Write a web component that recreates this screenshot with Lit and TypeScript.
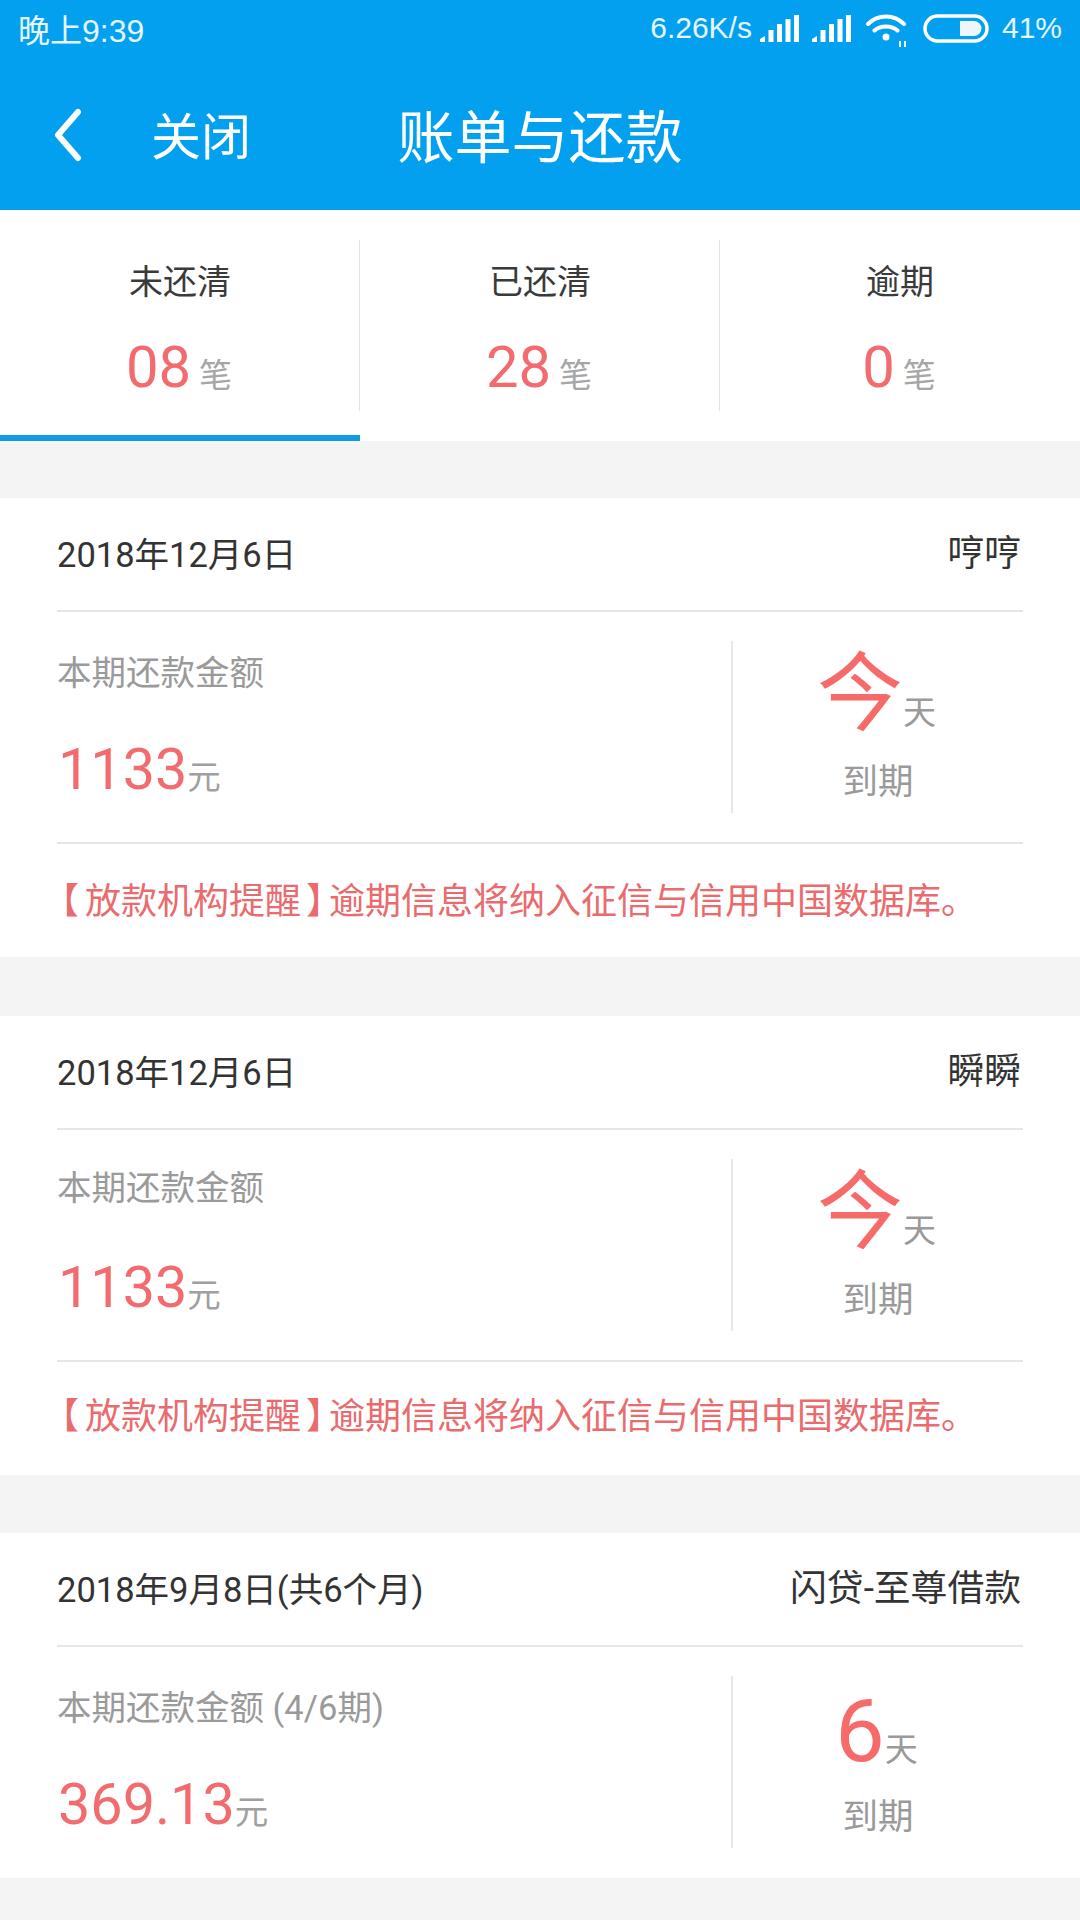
import { LitElement, html, css } from "lit";
import { customElement } from "lit/decorators.js";

interface Bill {
  date: string;
  name: string;
  label: string;
  amount: string;
  big: string;
  isToday: boolean;
  notice: boolean;
}

const bills: Bill[] = [
  { date: "2018年12月6日", name: "哼哼", label: "本期还款金额", amount: "1133", big: "今", isToday: true, notice: true },
  { date: "2018年12月6日", name: "瞬瞬", label: "本期还款金额", amount: "1133", big: "今", isToday: true, notice: true },
  { date: "2018年9月8日(共6个月)", name: "闪贷-至尊借款", label: "本期还款金额 (4/6期)", amount: "369.13", big: "6", isToday: false, notice: false },
];

const tabs = [
  { title: "未还清", count: "08", active: true },
  { title: "已还清", count: "28", active: false },
  { title: "逾期", count: "0", active: false },
];

const signal = html`<svg class="sig" width="39" height="28" viewBox="0 0 39 28">
  <path fill="#fff" d="M0 28v-3l5-3v6zM8.500 28V16h5v12zM17 28V10h5v18zM25.500 28V5h5v23zM34 28V1h5v27z"/>
</svg>`;

@customElement("app-root")
export class AppRoot extends LitElement {
  static styles = css`
    :host {
      display: block;
      width: 1080px;
      height: 1920px;
      overflow: hidden;
      background: #f4f4f4;
      font-family: Roboto, "Noto Sans CJK SC", sans-serif;
    }
    .top {
      background: #03a0f0;
      height: 210px;
      color: #fff;
      display: flex;
      flex-direction: column;
    }
    .status {
      height: 60px;
      box-sizing: border-box;
      padding: 0 18px 4px 18px;
      display: flex;
      align-items: center;
      font-family: "Liberation Sans", "Noto Sans CJK SC", sans-serif;
      font-size: 30px;
      color: #e6f6ff;
    }
    .time { flex: 1; font-size: 32px; }
    .speed { margin-right: 8px; }
    .sig { margin-right: 13px; display: block; }
    .sig + .sig { margin-right: 15px; }
    .wifi { margin: 4px 13px 0 0; display: block; }
    .batt { margin-right: 13px; display: block; }
    .nav {
      flex: 1;
      display: grid;
      grid-template-columns: 1fr auto 1fr;
      align-items: center;
      padding-bottom: 4px;
    }
    .back {
      display: flex;
      align-items: center;
      padding-left: 53px;
      gap: 68px;
      font-family: "Noto Sans CJK SC", sans-serif;
      font-size: 50px;
      line-height: 1;
    }
    .back svg { margin-top: 4px; }
    .title {
      font-family: "Noto Sans CJK SC", sans-serif;
      font-size: 57px;
      line-height: 1;
    }
    .tabs {
      display: flex;
      height: 231px;
      background: #fff;
    }
    .tab {
      flex: 1;
      position: relative;
      display: flex;
      flex-direction: column;
      align-items: center;
      padding-top: 50px;
      border-bottom: 6px solid transparent;
      box-sizing: border-box;
    }
    .tab.active { border-bottom-color: #129ce0; }
    .tab:not(:last-child)::after {
      content: "";
      position: absolute;
      right: 0;
      top: 30px;
      height: 171px;
      width: 1px;
      background: #e2e2e2;
    }
    .tab-title {
      font-size: 34px;
      line-height: 44px;
      color: #3a3a3a;
    }
    .tab-count {
      margin-top: 27px;
      display: flex;
      align-items: baseline;
      gap: 8px;
      line-height: 72px;
      padding-right: 2px;
    }
    .num {
      font-size: 58px;
      color: #f26b6e;
    }
    .unit { font-size: 33px; color: #a6a6a6; }
    .card {
      margin-top: 57px;
      background: #fff;
      padding: 0 57px;
    }
    .card:nth-of-type(2) { margin-top: 59px; }
    .card:nth-of-type(3) { margin-top: 58px; padding-bottom: 1px; }
    .head {
      height: 112px;
      display: flex;
      justify-content: space-between;
      border-bottom: 2px solid #e6e6e6;
      align-items: center;
      color: #333;
      font-size: 34.500px;
    }
    .date { margin-top: -5px; }
    .name { margin-right: 2px; margin-top: -8px; font-size: 36.800px; }
    .body {
      height: 230px;
      display: flex;
      align-items: center;
    }
    .left {
      width: 674px;
      height: 100%;
      display: flex;
      flex-direction: column;
      padding-left: 1px;
      box-sizing: border-box;
    }
    .label {
      margin: 36px 0 0 -1px;
      font-size: 34.500px;
      line-height: 50px;
      color: #9a9a9a;
    }
    .money {
      margin-top: 32px;
      display: flex;
      align-items: baseline;
      line-height: 80px;
    }
    .card:nth-of-type(2) .label { margin-top: 33px; }
    .card:nth-of-type(2) .money { margin-top: 35px; }
    .money b {
      font-weight: 400;
      font-size: 57.500px;
      color: #f26b6e;
    }
    .money span { font-size: 33.500px; color: #a0a0a0; }
    .right {
      flex: 1;
      height: 172px;
      border-left: 2px solid #e8e8e8;
      display: flex;
      flex-direction: column;
      align-items: center;
    }
    .due-top {
      display: flex;
      align-items: baseline;
      height: 116px;
      padding-right: 3px;
    }
    .big {
      font-family: "Noto Sans CJK SC", sans-serif;
      font-size: 86px;
      line-height: 92px;
      color: #f76a6a;
    }
    .big.digit { font-family: Roboto, sans-serif; font-size: 88px; line-height: 110px; }
    .day { font-family: "Noto Sans CJK SC", sans-serif; font-size: 33px; color: #9a9a9a; }
    .due { font-size: 35.500px; color: #9a9a9a; line-height: 50px; }
    .notice {
      border-top: 2px solid #e6e6e6;
      height: 115px;
      box-sizing: border-box;
      padding-bottom: 6px;
      display: flex;
      align-items: center;
      font-size: 36px;
      color: #e96b6d;
      white-space: nowrap;
    }
    .card:nth-of-type(2) .notice { padding-bottom: 11px; }
    .open { margin: 0 6px 0 -14px; }
    .close { margin-left: 5px; letter-spacing: -13px; }
  `;

  render() {
    return html`
      <div class="top">
        <div class="status">
          <span class="time">晚上9:39</span>
          <span class="speed">6.26K/s</span>
          ${signal}${signal}
          <svg class="wifi" width="44" height="34" viewBox="0 0 44 34">
            <path fill="none" stroke="#fff" stroke-width="4" stroke-linecap="round" d="M2 11C12 1 28 1 38 11M8.500 17.500C14 12 26 12 31.500 17.500"/>
            <circle cx="20" cy="24" r="3.500" fill="#fff"/>
            <path fill="#fff" d="M33 28h2v6h-2zM38 28h2v6h-2z"/>
          </svg>
          <svg class="batt" width="66" height="29" viewBox="0 0 66 29">
            <rect x="2" y="2" width="62" height="25" rx="12.500" fill="none" stroke="#fff" stroke-width="3.500"/>
            <path fill="#eef6fb" d="M37 7h14a7.500 7.500 0 0 1 0 15H37z"/>
          </svg>
          <span>41%</span>
        </div>
        <div class="nav">
          <div class="back">
            <svg width="30" height="54" viewBox="0 0 30 54">
              <path fill="none" stroke="#fff" stroke-width="6" stroke-linecap="round" stroke-linejoin="round" d="M25 4L5 27l20 23"/>
            </svg>
            <span>关闭</span>
          </div>
          <div class="title">账单与还款</div>
          <div></div>
        </div>
      </div>
      <div class="tabs">
        ${tabs.map(
          (t) => html`<div class="tab ${t.active ? "active" : ""}">
            <div class="tab-title">${t.title}</div>
            <div class="tab-count"><span class="num">${t.count}</span><span class="unit">笔</span></div>
          </div>`
        )}
      </div>
      ${bills.map(
        (b) => html`<section class="card">
          <div class="head"><span class="date">${b.date}</span><span class="name">${b.name}</span></div>
          <div class="body">
            <div class="left">
              <div class="label">${b.label}</div>
              <div class="money"><b>${b.amount}</b><span>元</span></div>
            </div>
            <div class="right">
              <div class="due-top">
                <span class="big ${b.isToday ? "" : "digit"}">${b.big}</span><span class="day">天</span>
              </div>
              <div class="due">到期</div>
            </div>
          </div>
          ${b.notice
            ? html`<div class="notice"><span class="open">【</span><span>放款机构提醒</span><span class="close">】</span><span>逾期信息将纳入征信与信用中国数据库。</span></div>`
            : ""}
        </section>`
      )}
    `;
  }
}
